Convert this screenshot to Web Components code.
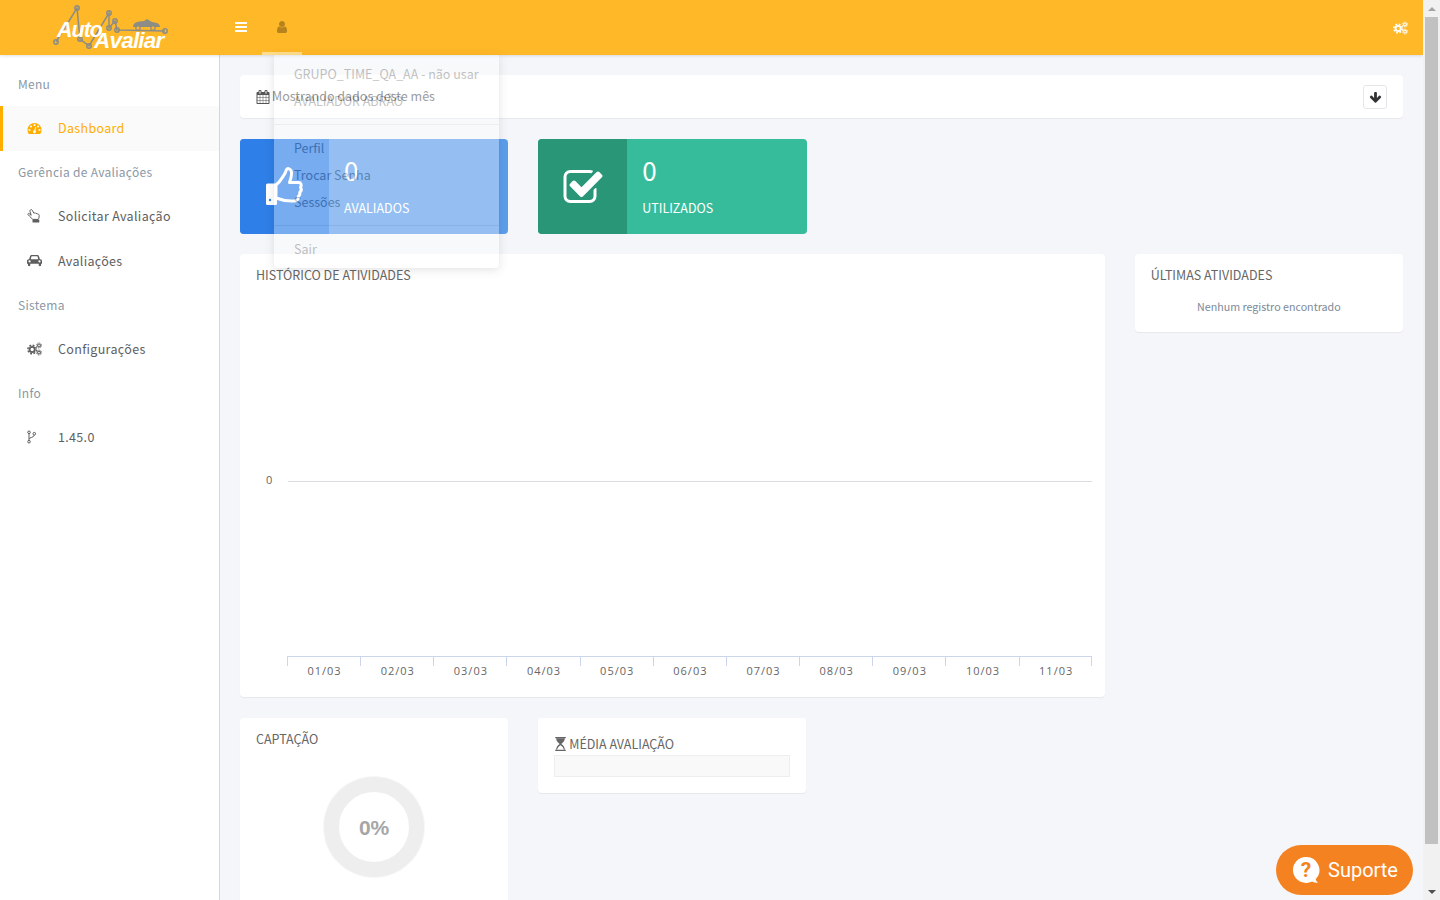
<!DOCTYPE html>
<html lang="pt-BR">
<head>
<meta charset="utf-8">
<title>Auto Avaliar</title>
<style>
	html, body { margin: 0; height: 100%; overflow: hidden; }
	body { font-family: "Noto Sans CJK JP", "Open Sans", sans-serif; font-size: 12.5px; color: #666; background: #f4f6fa; }
</style>
</head>
<body>
<app-shell>
	<top-bar slot="top"></top-bar>
	<side-nav slot="side">
		<nav-label>Menu</nav-label>
		<nav-item icon="dashboard" active>Dashboard</nav-item>
		<nav-label>Gerência de Avaliações</nav-label>
		<nav-item icon="hand" iw="13">Solicitar Avaliação</nav-item>
		<nav-item icon="car">Avaliações</nav-item>
		<nav-label>Sistema</nav-label>
		<nav-item icon="cogs">Configurações</nav-item>
		<nav-label>Info</nav-label>
		<nav-item icon="fork" iw="9">1.45.0</nav-item>
	</side-nav>
	<dash-board slot="main"></dash-board>
	<fake-scrollbar slot="bar"></fake-scrollbar>
</app-shell>
<support-button></support-button>

<script>
const ICONS = {
	bars: `<svg viewBox="0 0 1792 1792" fill="currentColor"><path d="M1664 1344v128q0 26-19 45t-45 19H192q-26 0-45-19t-19-45v-128q0-26 19-45t45-19h1408q26 0 45 19t19 45zm0-512v128q0 26-19 45t-45 19H192q-26 0-45-19t-19-45V832q0-26 19-45t45-19h1408q26 0 45 19t19 45zm0-512v128q0 26-19 45t-45 19H192q-26 0-45-19t-19-45V320q0-26 19-45t45-19h1408q26 0 45 19t19 45z"/></svg>`,
	user: `<svg viewBox="0 0 1792 1792" fill="currentColor"><path d="M1536 1399q0 109-62.5 187t-150.5 78H469q-88 0-150.5-78T256 1399q0-85 8.5-160.5t31.5-152 58.5-131 94-89T583 832q131 128 313 128t313-128q76 0 134.5 34.5t94 89 58.5 131 31.5 152 8.5 160.5zm-256-887q0 159-112.5 271.5T896 896 624.5 783.5 512 512t112.5-271.5T896 128t271.5 112.5T1280 512z"/></svg>`,
	arrow: `<svg viewBox="0 0 1792 1792" fill="currentColor"><path d="M1675 832q0 53-37 90l-651 652q-39 37-91 37-53 0-90-37l-651-652q-38-36-38-90 0-53 38-91l74-75q39-37 91-37 53 0 90 37l294 294V256q0-52 38-90t90-38h128q52 0 90 38t38 90v704l294-294q37-37 90-37 52 0 91 37l75 75q37 39 37 91z"/></svg>`,
	calendar: `<svg viewBox="0 0 1792 1792" fill="currentColor"><path d="M192 1664h288v-288H192v288zm352 0h320v-288H544v288zm-352-352h288V992H192v320zm352 0h320V992H544v320zM192 928h288V640H192v288zm736 736h320v-288H928v288zM544 928h320V640H544v288zm768 736h288v-288h-288v288zm-384-352h320V992H928v320zM576 448V160q0-13-9.5-22.5T544 128h-64q-13 0-22.5 9.5T448 160v288q0 13 9.5 22.5T480 480h64q13 0 22.5-9.5T576 448zm736 864h288V992h-288v320zM928 928h320V640H928v288zm384 0h288V640h-288v288zm32-480V160q0-13-9.5-22.5T1312 128h-64q-13 0-22.5 9.5T1216 160v288q0 13 9.5 22.5t22.5 9.5h64q13 0 22.5-9.5t9.5-22.5zm384-64v1280q0 52-38 90t-90 38H192q-52 0-90-38t-38-90V384q0-52 38-90t90-38h128v-96q0-66 47-113T480 0h64q66 0 113 47t47 113v96h384v-96q0-66 47-113t113-47h64q66 0 113 47t47 113v96h128q52 0 90 38t38 90z"/></svg>`,
	check: `<svg viewBox="0 0 1792 1792" fill="currentColor"><path d="M1472 930v318q0 119-84.5 203.5T1184 1536H352q-119 0-203.5-84.5T64 1248V416q0-119 84.5-203.5T352 128h832q63 0 117 25 15 7 18 23 3 17-9 29l-49 49q-10 10-23 10-3 0-9-2-23-6-45-6H352q-66 0-113 47t-47 113v832q0 66 47 113t113 47h832q66 0 113-47t47-113V994q0-13 9-22l64-64q10-10 23-10 6 0 12 3 20 8 20 29zm231-489l-814 814q-24 24-57 24t-57-24L345 825q-24-24-24-57t24-57l110-110q24-24 57-24t57 24l263 263 647-647q24-24 57-24t57 24l110 110q24 24 24 57t-24 57z"/></svg>`,
	thumb: `<svg viewBox="0 0 38 40"><path d="M11 18c4-3 6-7 8-10 1.500-2 2-4 2.500-5.500 1-1.500 3.500-1 4.500 1 1.200 2.500.5 6-1 10.500l-.5 1.500h9c2.500 0 3.500 2.500 2 4.800 1.300 1.800.8 3.700-.8 5 .6 1.800-.2 3.200-1.400 4.200.2 2.500-1 4.500-3.800 4.500-6 .5-12-.5-18.500-3z" fill="none" stroke="currentColor" stroke-width="3" stroke-linejoin="round"/><rect x="1" y="16.500" width="11" height="21.500" rx="1.500" fill="currentColor"/><circle cx="5" cy="33" r="1.200" fill="#2f7fe8"/></svg>`,
	dashboard: `<svg viewBox="0 0 1792 1792" fill="currentColor"><path d="M384 1152q0-53-37.500-90.500T256 1024t-90.500 37.500T128 1152t37.500 90.500T256 1280t90.500-37.500T384 1152zm192-448q0-53-37.500-90.500T448 576t-90.500 37.500T320 704t37.500 90.500T448 832t90.500-37.500T576 704zm428 505l101-382q6-26-7.500-48.500T1059 749t-48 6.500-30 39.500l-101 382q-60 5-107 43.500t-63 98.500q-20 77 20 146t117 89 146-20 89-117q16-60-6-117t-72-91zm660-57q0-53-37.500-90.500T1536 1024t-90.500 37.500-37.500 90.500 37.500 90.500 90.500 37.500 90.500-37.500 37.500-90.500zm-640-640q0-53-37.500-90.500T896 384t-90.500 37.500T768 512t37.500 90.500T896 640t90.500-37.500T1024 512zm448 192q0-53-37.500-90.500T1344 576t-90.500 37.500T1216 704t37.500 90.500 90.500 37.500 90.500-37.500T1472 704zm320 448q0 261-141 483-19 29-54 29H195q-35 0-54-29Q0 1414 0 1152q0-182 71-348t191-286 286-191 348-71 348 71 286 191 191 286 71 348z"/></svg>`,
	car: `<svg viewBox="0 0 16 14" fill="currentColor"><path fill-rule="evenodd" d="M3.200 1.800C3.500.9 4.200.5 5 .5h6c.8 0 1.500.4 1.800 1.300L13.800 5h.4C15.200 5 16 5.800 16 6.800V10h-1v1.500c0 1.300-2.500 1.300-2.500 0V10h-9v1.500C3.500 12.800 1 12.800 1 11.500V10H0V6.800C0 5.800.8 5 1.800 5h.4zM4 5h8l-.8-2.800c-.1-.3-.2-.4-.5-.4H5.300c-.3 0-.4.1-.5.400zM2.700 6.200a1.200 1.200 0 1 0 0 2.400 1.200 1.200 0 0 0 0-2.400zm10.600 0a1.200 1.200 0 1 0 0 2.400 1.200 1.200 0 0 0 0-2.400z"/></svg>`,
	cogs: `<svg viewBox="0 0 16 14"><circle cx="5.500" cy="7.500" r="2.800" fill="none" stroke="currentColor" stroke-width="2"/><circle cx="5.500" cy="7.500" r="4.600" fill="none" stroke="currentColor" stroke-width="1.500" stroke-dasharray="2 1.610"/><circle cx="12.800" cy="3.200" r="1.500" fill="none" stroke="currentColor" stroke-width="1.200"/><circle cx="12.800" cy="3.200" r="2.700" fill="none" stroke="currentColor" stroke-width=".9" stroke-dasharray="1.200 .92"/><circle cx="12.800" cy="10.800" r="1.500" fill="none" stroke="currentColor" stroke-width="1.200"/><circle cx="12.800" cy="10.800" r="2.700" fill="none" stroke="currentColor" stroke-width=".9" stroke-dasharray="1.200 .92"/></svg>`,
	hand: `<svg viewBox="0 0 13 14"><path d="M3.500.8c.7-.5 1.400-.2 1.800.5l1.600 2.900c.9-.5 1.700-.4 2.200.3.700-.3 1.300-.1 1.600.5.700 0 1.600.5 1.500 1.500l-.3 2.700-.9 1.200H5.800L2.500 7.200 1 5.600c-.5-.7.400-1.500 1.100-1l2.100 1.700-1.200-3.900c-.2-.6-.1-1.200.5-1.600z" fill="none" stroke="currentColor" stroke-width="1" stroke-linejoin="round"/><rect x="5.500" y="10.600" width="6.800" height="2.900" rx=".5" fill="currentColor"/></svg>`,
	fork: `<svg viewBox="0 0 9 13" fill="none" stroke="currentColor" stroke-width="1"><circle cx="2" cy="1.800" r="1.300"/><circle cx="7.300" cy="3.200" r="1.300"/><circle cx="2" cy="11.200" r="1.300"/><path d="M2 3.100v6.800M7.300 4.500c0 2.500-5.300 2.500-5.300 4"/></svg>`,
	hourglass: `<svg viewBox="0 0 14 16" fill="currentColor"><path d="M1 0h12v1.500H1zM1 14.500h12V16H1z"/><path d="M2 1.500h10c0 3-2 5-4 6.500 2 1.500 4 3.500 4 6.500h-1.200C10.500 12 8.500 10.500 7 9.300 5.500 10.500 3.500 12 3.200 14.500H2c0-3 2-5 4-6.500C4 6.500 2 4.500 2 1.500z"/></svg>`
};

class XIcon extends HTMLElement
{
	constructor ()
	{
		super();
		this.attachShadow({mode:"open"});
	}

	connectedCallback ()
	{
		let w = this.getAttribute("w") || 14;
		let h = this.getAttribute("h") || w;
		this.shadowRoot.innerHTML = `
			<style>
				:host { display: inline-flex; width: ${w}px; height: ${h}px; flex: none; }
				svg { display: block; width: 100%; height: 100%; overflow: visible; }
			</style>
			${ICONS[this.getAttribute("name")]}
		`;
	}
}
customElements.define("x-icon", XIcon);

class AppShell extends HTMLElement
{
	constructor ()
	{
		super();
		this.attachShadow({mode:"open"});
		this.shadowRoot.innerHTML = `
			<style>
				:host {
					display: grid;
					grid-template-columns: 220px 1203px 17px;
					grid-template-rows: 55px 845px;
					height: 900px;
					overflow: hidden;
				}
				::slotted([slot=top]) { grid-column: 1 / 3; grid-row: 1; }
				::slotted([slot=side]) { grid-column: 1; grid-row: 2; }
				::slotted([slot=main]) { grid-column: 2; grid-row: 2; }
				::slotted([slot=bar]) { grid-column: 3; grid-row: 1 / 3; }
			</style>
			<slot name="top"></slot>
			<slot name="side"></slot>
			<slot name="main"></slot>
			<slot name="bar"></slot>
		`;
	}
}
customElements.define("app-shell", AppShell);

class TopBar extends HTMLElement
{
	constructor ()
	{
		super();
		this.attachShadow({mode:"open"});
		this.shadowRoot.innerHTML = `
			<style>
				:host {
					display: flex;
					align-items: stretch;
					position: relative;
					z-index: 5;
					background: #ffb827;
					box-shadow: 0 1px 3px rgba(0,0,0,.12);
					color: #fff;
				}
				.brand { width: 220px; flex: none; }
				.brand svg { display: block; width: 220px; height: 55px; }
				.tab { display: flex; align-items: center; justify-content: center; width: 40px; height: 55px; box-sizing: border-box; }
				.bars { margin-left: 1px; padding-bottom: 1px; }
				.user { margin-left: 1px; color: #b5821e; border-bottom: 3px solid #ffdd8c; padding-top: 2px; }
				.spacer { flex: 1; }
				.gear { display: flex; align-items: center; padding-right: 15px; }
				user-menu { position: absolute; left: 274px; top: 55px; }
			</style>
			<div class="brand">
				<svg viewBox="0 0 220 55">
					<g fill="none" stroke="#8d8d86" stroke-width="1.500">
						<polyline points="56,42 77,8 80,39 89,46 109,13 109,28 115,21 117,30 165,31"/>
						<circle cx="56" cy="42" r="2.200"/><circle cx="77" cy="8" r="2.200"/><circle cx="80" cy="39" r="2.200"/><circle cx="89" cy="46" r="2.200"/>
						<circle cx="109" cy="13" r="2.200"/><circle cx="109" cy="28" r="2.200"/><circle cx="115" cy="21" r="2.200"/><circle cx="117" cy="30" r="2.200"/>
						<circle cx="165" cy="31" r="2.200"/>
					</g>
					<path d="M133 26c1-3 3-4 6-4.500l5-.5 3-2 5 3 5 1c2 1 3 2 3 4h-27z" fill="#8d8d86"/>
					<circle cx="138" cy="28" r="2.200" fill="#ffb827" stroke="#8d8d86" stroke-width="1.200"/>
					<circle cx="153" cy="28" r="2.200" fill="#ffb827" stroke="#8d8d86" stroke-width="1.200"/>
					<text x="57" y="37" fill="#fff" font-family="Liberation Sans" font-style="italic" font-weight="700" font-size="21.500" letter-spacing="-1">Auto</text>
					<text x="94" y="48" fill="#fff" font-family="Liberation Sans" font-style="italic" font-weight="700" font-size="22.500" letter-spacing="-.8">Avaliar</text>
				</svg>
			</div>
			<div class="tab bars"><x-icon name="bars" w="14"></x-icon></div>
			<div class="tab user"><x-icon name="user" w="14"></x-icon></div>
			<div class="spacer"></div>
			<div class="gear"><x-icon name="cogs" w="15" h="14"></x-icon></div>
			<user-menu></user-menu>
		`;
	}
}
customElements.define("top-bar", TopBar);

class UserMenu extends HTMLElement
{
	constructor ()
	{
		super();
		this.attachShadow({mode:"open"});
		this.shadowRoot.innerHTML = `
			<style>
				:host {
					display: block;
					box-sizing: border-box;
					width: 225px;
					height: 213px;
					padding: 5px 0 0 20px;
					background: #fff;
					opacity: .35;
					border-radius: 0 0 4px 4px;
					box-shadow: 0 2px 8px rgba(0,0,0,.3);
					color: #555;
					font-size: 12.500px;
					line-height: 27px;
				}
				div { white-space: nowrap; height: 27px; }
				hr { border: 0; border-top: 1px solid #ddd; margin: 10px 0 9px -20px; }
			</style>
			<div>GRUPO_TIME_QA_AA - não usar</div>
			<div>AVALIADOR ABRÃO</div>
			<hr>
			<div>Perfil</div>
			<div>Trocar Senha</div>
			<div>Sessões</div>
			<hr>
			<div>Sair</div>
		`;
	}
}
customElements.define("user-menu", UserMenu);

class SideNav extends HTMLElement
{
	constructor ()
	{
		super();
		this.attachShadow({mode:"open"});
		this.shadowRoot.innerHTML = `
			<style>
				:host {
					display: block;
					box-sizing: border-box;
					padding-top: 8px;
					background: #fff;
					border-right: 1px solid #d5d7db;
				}
			</style>
			<slot></slot>
		`;
	}
}
customElements.define("side-nav", SideNav);

class NavLabel extends HTMLElement
{
	constructor ()
	{
		super();
		this.attachShadow({mode:"open"});
		this.shadowRoot.innerHTML = `
			<style>
				:host {
					display: flex;
					align-items: center;
					box-sizing: border-box;
					height: 43px;
					padding: 0 0 2px 18px;
					font-size: 12px;
					letter-spacing: .3px;
					color: #8b97a6;
				}
			</style>
			<slot></slot>
		`;
	}
}
customElements.define("nav-label", NavLabel);

class NavItem extends HTMLElement
{
	constructor ()
	{
		super();
		this.attachShadow({mode:"open"});
	}

	connectedCallback ()
	{
		this.shadowRoot.innerHTML = `
			<style>
				:host {
					display: flex;
					align-items: center;
					box-sizing: border-box;
					height: 45px;
					padding: 0 0 2px 27px;
					font-size: 12.500px;
					letter-spacing: .33px;
					color: #5e5e5e;
				}
				:host([active]) {
					background: #fafafa;
					border-left: 3px solid #ffae00;
					padding-left: 24px;
					color: #ffae00;
				}
				.ic { width: 31px; display: flex; flex: none; }
			</style>
			<span class="ic"><x-icon name="${this.getAttribute("icon")}" w="${this.getAttribute("iw") || 15}" h="14"></x-icon></span>
			<slot></slot>
		`;
	}
}
customElements.define("nav-item", NavItem);

class PanelCard extends HTMLElement
{
	constructor ()
	{
		super();
		this.attachShadow({mode:"open"});
		this.shadowRoot.innerHTML = `
			<style>
				:host {
					display: block;
					box-sizing: border-box;
					background: #fff;
					border-radius: 4px;
					box-shadow: 0 1px 1px rgba(0,0,0,.06);
				}
			</style>
			<slot></slot>
		`;
	}
}
customElements.define("panel-card", PanelCard);

class InfoBox extends HTMLElement
{
	constructor ()
	{
		super();
		this.attachShadow({mode:"open"});
	}

	connectedCallback ()
	{
		let s = this.getAttribute("is") || 40;
		this.shadowRoot.innerHTML = `
			<style>
				:host {
					display: flex;
					height: 95px;
					border-radius: 4px;
					overflow: hidden;
					background: var(--tone);
					color: #fff;
				}
				.icon { width: 89px; box-sizing: border-box; flex: none; display: flex; align-items: center; justify-content: center; background: var(--dark); padding: var(--ipad); }
				.body { padding-left: 15px; }
				.num { font-size: 26px; line-height: 32px; margin-top: 15px; }
				.lab { font-size: 12.500px; line-height: 20px; margin-top: 12px; }
			</style>
			<div class="icon"><x-icon name="${this.getAttribute("icon")}" w="${s}" h="${s}"></x-icon></div>
			<div class="body">
				<div class="num">${this.getAttribute("value")}</div>
				<div class="lab">${this.getAttribute("label")}</div>
			</div>
		`;
	}
}
customElements.define("info-box", InfoBox);

class ActivityChart extends HTMLElement
{
	constructor ()
	{
		super();
		this.attachShadow({mode:"open"});
		let days = ["01/03","02/03","03/03","04/03","05/03","06/03","07/03","08/03","09/03","10/03","11/03"];
		this.shadowRoot.innerHTML = `
			<style>
				:host { display: block; padding: 0 13px 0 16px; font-size: 11px; color: #666; letter-spacing: 1px; font-family: "Open Sans", sans-serif; }
				.plot { display: flex; align-items: center; box-sizing: border-box; height: 362px; margin-top: 9px; padding-top: 10px; }
				.zero { width: 32px; flex: none; box-sizing: border-box; padding-left: 10px; position: relative; top: -1px; }
				.line { flex: 1; border-top: 1px solid #d8dbe2; margin-top: 2px; }
				.axis { display: grid; grid-template-columns: repeat(11, 1fr); margin-left: 31px; border-top: 1px solid #ccd6eb; }
				.axis div {
					height: 26px;
					box-sizing: border-box;
					text-align: center;
					padding: 6px 0 0 2px;
					line-height: 15px;
					background: linear-gradient(#ccd6eb, #ccd6eb) left top / 1px 9px no-repeat;
				}
				.axis div:last-child {
					background:
						linear-gradient(#ccd6eb, #ccd6eb) left top / 1px 9px no-repeat,
						linear-gradient(#ccd6eb, #ccd6eb) right top / 1px 9px no-repeat;
				}
			</style>
			<div class="plot"><span class="zero">0</span><div class="line"></div></div>
			<div class="axis">${days.map(d => `<div>${d}</div>`).join("")}</div>
		`;
	}
}
customElements.define("activity-chart", ActivityChart);

class GaugeRing extends HTMLElement
{
	constructor ()
	{
		super();
		this.attachShadow({mode:"open"});
		this.shadowRoot.innerHTML = `
			<style>
				:host { display: grid; place-items: center; width: 102px; height: 102px; border-radius: 50%; box-sizing: border-box; background: #f7f7f7; }
				.ring { display: grid; place-items: center; width: 100px; height: 100px; box-sizing: border-box; border: 15px solid #eee; border-radius: 50%; background: #fff; }
				span { font: 700 21px "Liberation Sans", sans-serif; color: #a6a6a6; padding-top: 1px; }
			</style>
			<div class="ring"><span>0%</span></div>
		`;
	}
}
customElements.define("gauge-ring", GaugeRing);

class DashBoard extends HTMLElement
{
	constructor ()
	{
		super();
		this.attachShadow({mode:"open"});
		this.shadowRoot.innerHTML = `
			<style>
				:host {
					display: grid;
					grid-template-columns: repeat(4, 268.250px);
					column-gap: 30px;
					grid-auto-rows: min-content;
					align-content: start;
					padding: 20px 20px 0 20px;
					height: 845px;
					box-sizing: border-box;
					overflow: hidden;
					background: #f4f6fa;
					color: #666;
				}
				.tool {
					grid-column: 1 / -1;
					display: flex;
					align-items: center;
					height: 43px;
					padding: 0 16px;
					margin-bottom: 21px;
				}
				.tool .cal { color: #555; margin-right: 2px; }
				.tool span { flex: 1; position: relative; top: -1px; }
				.btn { width: 24px; height: 24px; box-sizing: border-box; border: 1px solid #e4e6ea; border-radius: 3px; display: flex; align-items: center; justify-content: center; color: #333; padding-top: 1px; }
				.boxes { grid-column: 1 / -1; display: grid; grid-template-columns: subgrid; margin-bottom: 20px; }
				.blue { --tone: #5c9deb; --dark: #2f7fe8; --ipad: 0 2px 0 0; }
				.green { --tone: #37bc9b; --dark: #2a9678; --ipad: 2px 0 0 0; }
				.title { padding: 11px 16px 0; line-height: 20px; font-size: 12.500px; color: #666; }
				.hist { grid-column: 1 / 4; height: 443px; margin-bottom: 21px; }
				.last { grid-column: 4; height: 78px; }
				.none { text-align: center; font-size: 10.700px; line-height: 18px; color: #7b8a99; margin-top: 13px; }
				.cap { grid-column: 1; height: 300px; }
				.cap gauge-ring { margin: 27px auto 0; }
				.med { grid-column: 2; width: 268px; height: 75px; padding: 18px 16px 0; }
				.med .head { display: flex; align-items: center; box-sizing: border-box; height: 19px; padding-bottom: 3px; line-height: 16px; font-size: 12.500px; }
				.med x-icon { margin-right: 2px; }
				.bar { height: 22px; box-sizing: border-box; background: #f9f9f9; border: 1px solid #eee; }
			</style>
			<panel-card class="tool">
				<div style="display:flex;align-items:center;width:100%">
					<x-icon class="cal" name="calendar" w="14" h="14"></x-icon>
					<span>Mostrando dados deste mês</span>
					<div class="btn"><x-icon name="arrow" w="13"></x-icon></div>
				</div>
			</panel-card>
			<div class="boxes">
				<info-box class="blue" icon="thumb" is="40" value="0" label="AVALIADOS"></info-box>
				<info-box class="green" icon="check" is="42" value="0" label="UTILIZADOS"></info-box>
			</div>
			<panel-card class="hist">
				<div class="title">HISTÓRICO DE ATIVIDADES</div>
				<activity-chart></activity-chart>
			</panel-card>
			<panel-card class="last">
				<div class="title">ÚLTIMAS ATIVIDADES</div>
				<div class="none">Nenhum registro encontrado</div>
			</panel-card>
			<panel-card class="cap">
				<div class="title">CAPTAÇÃO</div>
				<gauge-ring></gauge-ring>
			</panel-card>
			<panel-card class="med">
				<div class="head"><x-icon name="hourglass" w="13" h="14"></x-icon>MÉDIA AVALIAÇÃO</div>
				<div class="bar"></div>
			</panel-card>
		`;
	}
}
customElements.define("dash-board", DashBoard);

class FakeScrollbar extends HTMLElement
{
	constructor ()
	{
		super();
		this.attachShadow({mode:"open"});
		this.shadowRoot.innerHTML = `
			<style>
				:host { display: flex; flex-direction: column; align-items: center; background: #f1f1f1; position: relative; z-index: 6; }
				.up, .down { height: 17px; width: 100%; display: flex; align-items: center; justify-content: center; flex: none; }
				.up::before { content: ""; border: 4px solid transparent; border-top: 0; border-bottom: 4px solid #a3a3a3; }
				.down::before { content: ""; border: 4px solid transparent; border-bottom: 0; border-top: 4px solid #505050; }
				.thumb { width: 13px; height: 827px; flex: none; background: #c1c1c1; }
				.rest { flex: 1; }
			</style>
			<div class="up"></div>
			<div class="thumb"></div>
			<div class="rest"></div>
			<div class="down"></div>
		`;
	}
}
customElements.define("fake-scrollbar", FakeScrollbar);

class SupportButton extends HTMLElement
{
	constructor ()
	{
		super();
		this.attachShadow({mode:"open"});
		this.shadowRoot.innerHTML = `
			<style>
				:host {
					position: fixed;
					left: 1276px;
					top: 845px;
					z-index: 9;
					display: flex;
					align-items: center;
					box-sizing: border-box;
					width: 137px;
					height: 50px;
					padding-left: 16px;
					border-radius: 25px;
					background: #f58220;
					color: #fff;
					font: 400 20px Roboto, sans-serif;
				}
				svg { width: 28px; height: 28px; margin-right: 8px; flex: none; }
				text { font: 700 21px Roboto, sans-serif; fill: #f58220; }
			</style>
			<svg viewBox="0 0 28 28">
				<path d="M14 1a13 13 0 1 0 6 24.500c1.500 1 4 1.500 6 1-1.500-.8-2-2-2.300-3.500A13 13 0 0 0 14 1z" fill="#fff"/>
				<text x="14" y="21" text-anchor="middle">?</text>
			</svg>
			Suporte
		`;
	}
}
customElements.define("support-button", SupportButton);
</script>
</body>
</html>
